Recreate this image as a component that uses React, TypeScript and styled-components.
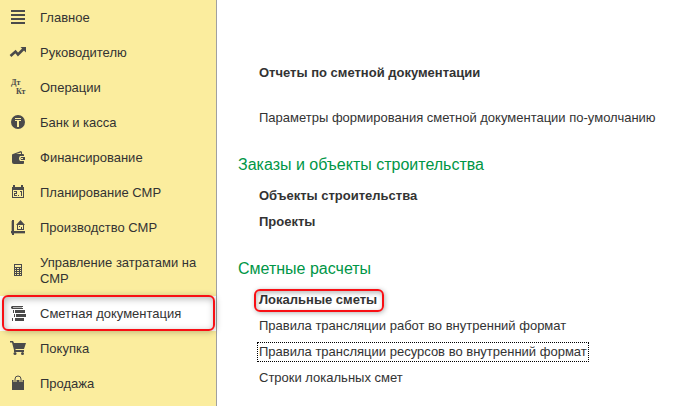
import React from "react";
import styled, { createGlobalStyle, css } from "styled-components";

const GlobalStyle = createGlobalStyle`
  *, *::before, *::after { box-sizing: border-box; }
  body {
    margin: 0;
    background: #ffffff;
    color: #333333;
    font-family: "Liberation Sans", Arial, sans-serif;
    font-size: 13px;
  }
`;

const Layout = styled.div`
  display: flex;
  min-height: 100vh;
`;

const Sidebar = styled.nav`
  flex: 0 0 217px;
  background: #fbed9e;
  border-right: 1px solid #a0a0a0;
`;

const List = styled.ul`
  margin: 0;
  padding: 0;
  list-style: none;
`;

const callout = css`
  position: relative;

  &::after {
    content: "";
    position: absolute;
    border: 2px solid #f80f14;
    border-radius: 6px;
    pointer-events: none;
  }
`;

const NavButton = styled.button<{ $active?: boolean }>`
  display: flex;
  align-items: center;
  gap: 13px;
  width: 100%;
  min-height: 35px;
  padding: 1px 9px 0;
  border: 0;
  background: ${(p) => (p.$active ? "#ffffff" : "transparent")};
  color: inherit;
  font: inherit;
  line-height: 16px;
  text-align: left;
  cursor: pointer;

  ${(p) =>
    p.$active &&
    css`
      ${callout}
      &::after {
        inset: -1px 1px 0 2px;
        box-shadow: 1px 1px 6px rgba(0, 0, 0, 0.25), inset 1px 2px 7px rgba(0, 0, 0, 0.28);
      }
    `}
`;

const NavLabel = styled.span`
  flex: 1;
  padding: 9px 0;
`;

const Icon = styled.svg`
  flex: none;
  width: 18px;
  height: 18px;
  fill: #4a4a4a;
  stroke: none;
`;

const IconText = styled.text`
  font: bold 8px "Liberation Serif", "Times New Roman", serif;
`;

const Main = styled.main`
  flex: 1;
  min-width: 0;
  padding: 60px 20px 15px 21px;
`;

const Section = styled.section`
  margin-bottom: 22px;

  &:last-child {
    margin-bottom: 0;
  }
`;

const Heading = styled.h2`
  margin: 0 0 6px;
  color: #009646;
  font-size: 16px;
  font-weight: normal;
  line-height: 24px;
`;

const Item = styled.li<{ $spaced?: boolean }>`
  display: flex;
  align-items: center;
  height: 26px;
  padding-left: 19px;
  margin-bottom: ${(p) => (p.$spaced ? 19 : 0)}px;
`;

const ItemLink = styled.a<{ $bold?: boolean; $focused?: boolean; $marked?: boolean }>`
  padding: 0 1px;
  border: 1px dotted ${(p) => (p.$focused ? "#000000" : "transparent")};
  color: inherit;
  font-weight: ${(p) => (p.$bold ? "bold" : "normal")};
  line-height: 18px;
  text-decoration: none;
  white-space: nowrap;

  ${(p) =>
    p.$marked &&
    css`
      ${callout}
      &::after {
        inset: -2px -6px -3px -4px;
        box-shadow: 1px 1px 5px rgba(0, 0, 0, 0.3), inset 1px 2px 5px rgba(0, 0, 0, 0.28);
      }
    `}
`;

const icons = {
  menu: <path d="M2 1h14v2H2zM2 5h14v2H2zM2 9h14v2H2zM2 13h14v2H2z" />,
  trend: (
    <>
      <path d="M1.5 12L6.5 7.5L9 10.5L14.5 5" fill="none" stroke="#4a4a4a" strokeWidth="2.6" />
      <path d="M11.5 3H17V8.5z" />
    </>
  ),
  ledger: (
    <>
      <IconText x="2" y="6">Дт</IconText>
      <IconText x="7" y="15">Кт</IconText>
    </>
  ),
  coin: (
    <>
      <circle cx="9" cy="8" r="7" />
      <path d="M6 4h6v1H6zM6 6h6v1h-2v6H8V7H6z" fill="#fbed9e" />
    </>
  ),
  wallet: (
    <>
      <path d="M4 5L12 2l1 1v2h-1V3.5L7 5z" />
      <path d="M3 6q0-1 1-1h10q1 0 1 1v8q0 1-1 1H5q-2 0-2-2z" />
      <path d="M11 7h5v5h-5q-2-2.500 0-5z" fill="#fbed9e" />
      <path d="M12 8h4v3h-4q-1-1.500 0-3z" />
      <path d="M12 9h2v1h-2z" fill="#fbed9e" />
    </>
  ),
  calendar: (
    <>
      <path d="M4 1h2v2h6V1h2v2h1v11H3V3h1zM4 6v7h10V6z" fillRule="evenodd" />
      <path d="M5 7h3v3H6v1h2v1H5V9h2V8H5zM9 11h1v1H9zM11 7h2v5h-1V8h-1z" />
    </>
  ),
  house: (
    <>
      <path d="M3 1h2v15H3zM2 12h14v2H2z" />
      <path d="M2 2h1v10H2zM2 14h14v1H2z" opacity="0.35" />
      <path d="M7 6L11.500 1L16 6h-1v5H8V6zM9 6v4h5V6z" fillRule="evenodd" />
      <path d="M10 7h1v1h-1zM12 8h1v2h-1z" />
    </>
  ),
  calculator: (
    <path
      d="M5 2h8v12H5zM6 3v2h6V3zM6 6v1h1V6zM8 6v1h2V6zM11 6v1h1V6zM6 8v1h1V8zM8 8v1h2V8zM11 8v1h1V8zM6 10v1h1v-1zM8 10v1h2v-1zM11 10v1h1v-1zM6 12v1h1v-1zM8 12v1h2v-1zM11 12v1h1v-1z"
      fillRule="evenodd"
    />
  ),
  estimate: (
    <>
      <path d="M3 1h11v1H4v1h10v1H3L2 3V2z" />
      <path d="M4 2h9v1H4z" opacity="0.4" />
      <path d="M4 5h1v3H4zM6 5h10v3H6zM5 9h1v3H5zM7 9h10v3H7zM3 13h1v3H3zM6 13h9v3H6z" />
    </>
  ),
  cart: (
    <>
      <path d="M1 1h3l1 2h12l-2 6H6.500v1H15v2H5V10L3 2.500H1z" />
      <circle cx="6" cy="13.500" r="1.500" />
      <circle cx="13.500" cy="13.500" r="1.500" />
    </>
  ),
  bag: (
    <>
      <path d="M3 5h12v10H3z" />
      <path d="M6 7V4q0-3 3-3t3 3v3" fill="none" stroke="#fbed9e" strokeWidth="3" />
      <path d="M6 8V4q0-3 3-3t3 3v4" fill="none" stroke="#4a4a4a" strokeWidth="1" />
      <path d="M8 5h2v3H8z" />
    </>
  ),
};

type NavEntry = { label: string; icon: keyof typeof icons; active?: boolean };

const navigation: NavEntry[] = [
  { label: "Главное", icon: "menu" },
  { label: "Руководителю", icon: "trend" },
  { label: "Операции", icon: "ledger" },
  { label: "Банк и касса", icon: "coin" },
  { label: "Финансирование", icon: "wallet" },
  { label: "Планирование СМР", icon: "calendar" },
  { label: "Производство СМР", icon: "house" },
  { label: "Управление затратами на СМР", icon: "calculator" },
  { label: "Сметная документация", icon: "estimate", active: true },
  { label: "Покупка", icon: "cart" },
  { label: "Продажа", icon: "bag" },
];

type Entry = { label: string; bold?: boolean; focused?: boolean; marked?: boolean; spaced?: boolean };

const sections: { title?: string; items: Entry[] }[] = [
  {
    items: [
      { label: "Отчеты по сметной документации", bold: true, spaced: true },
      { label: "Параметры формирования сметной документации по-умолчанию" },
    ],
  },
  {
    title: "Заказы и объекты строительства",
    items: [
      { label: "Объекты строительства", bold: true },
      { label: "Проекты", bold: true },
    ],
  },
  {
    title: "Сметные расчеты",
    items: [
      { label: "Локальные сметы", bold: true, marked: true },
      { label: "Правила трансляции работ во внутренний формат" },
      { label: "Правила трансляции ресурсов во внутренний формат", focused: true },
      { label: "Строки локальных смет" },
    ],
  },
];

export default function App() {
  return (
    <>
      <GlobalStyle />
      <Layout>
        <Sidebar>
          <List>
            {navigation.map((entry) => (
              <li key={entry.label}>
                <NavButton type="button" $active={entry.active} aria-current={entry.active ? "page" : undefined}>
                  <Icon viewBox="0 0 18 18" aria-hidden="true">
                    {icons[entry.icon]}
                  </Icon>
                  <NavLabel>{entry.label}</NavLabel>
                </NavButton>
              </li>
            ))}
          </List>
        </Sidebar>
        <Main>
          {sections.map((section, index) => (
            <Section key={index}>
              {section.title && <Heading>{section.title}</Heading>}
              <List>
                {section.items.map((item) => (
                  <Item key={item.label} $spaced={item.spaced}>
                    <ItemLink href="#" $bold={item.bold} $focused={item.focused} $marked={item.marked}>
                      {item.label}
                    </ItemLink>
                  </Item>
                ))}
              </List>
            </Section>
          ))}
        </Main>
      </Layout>
    </>
  );
}
